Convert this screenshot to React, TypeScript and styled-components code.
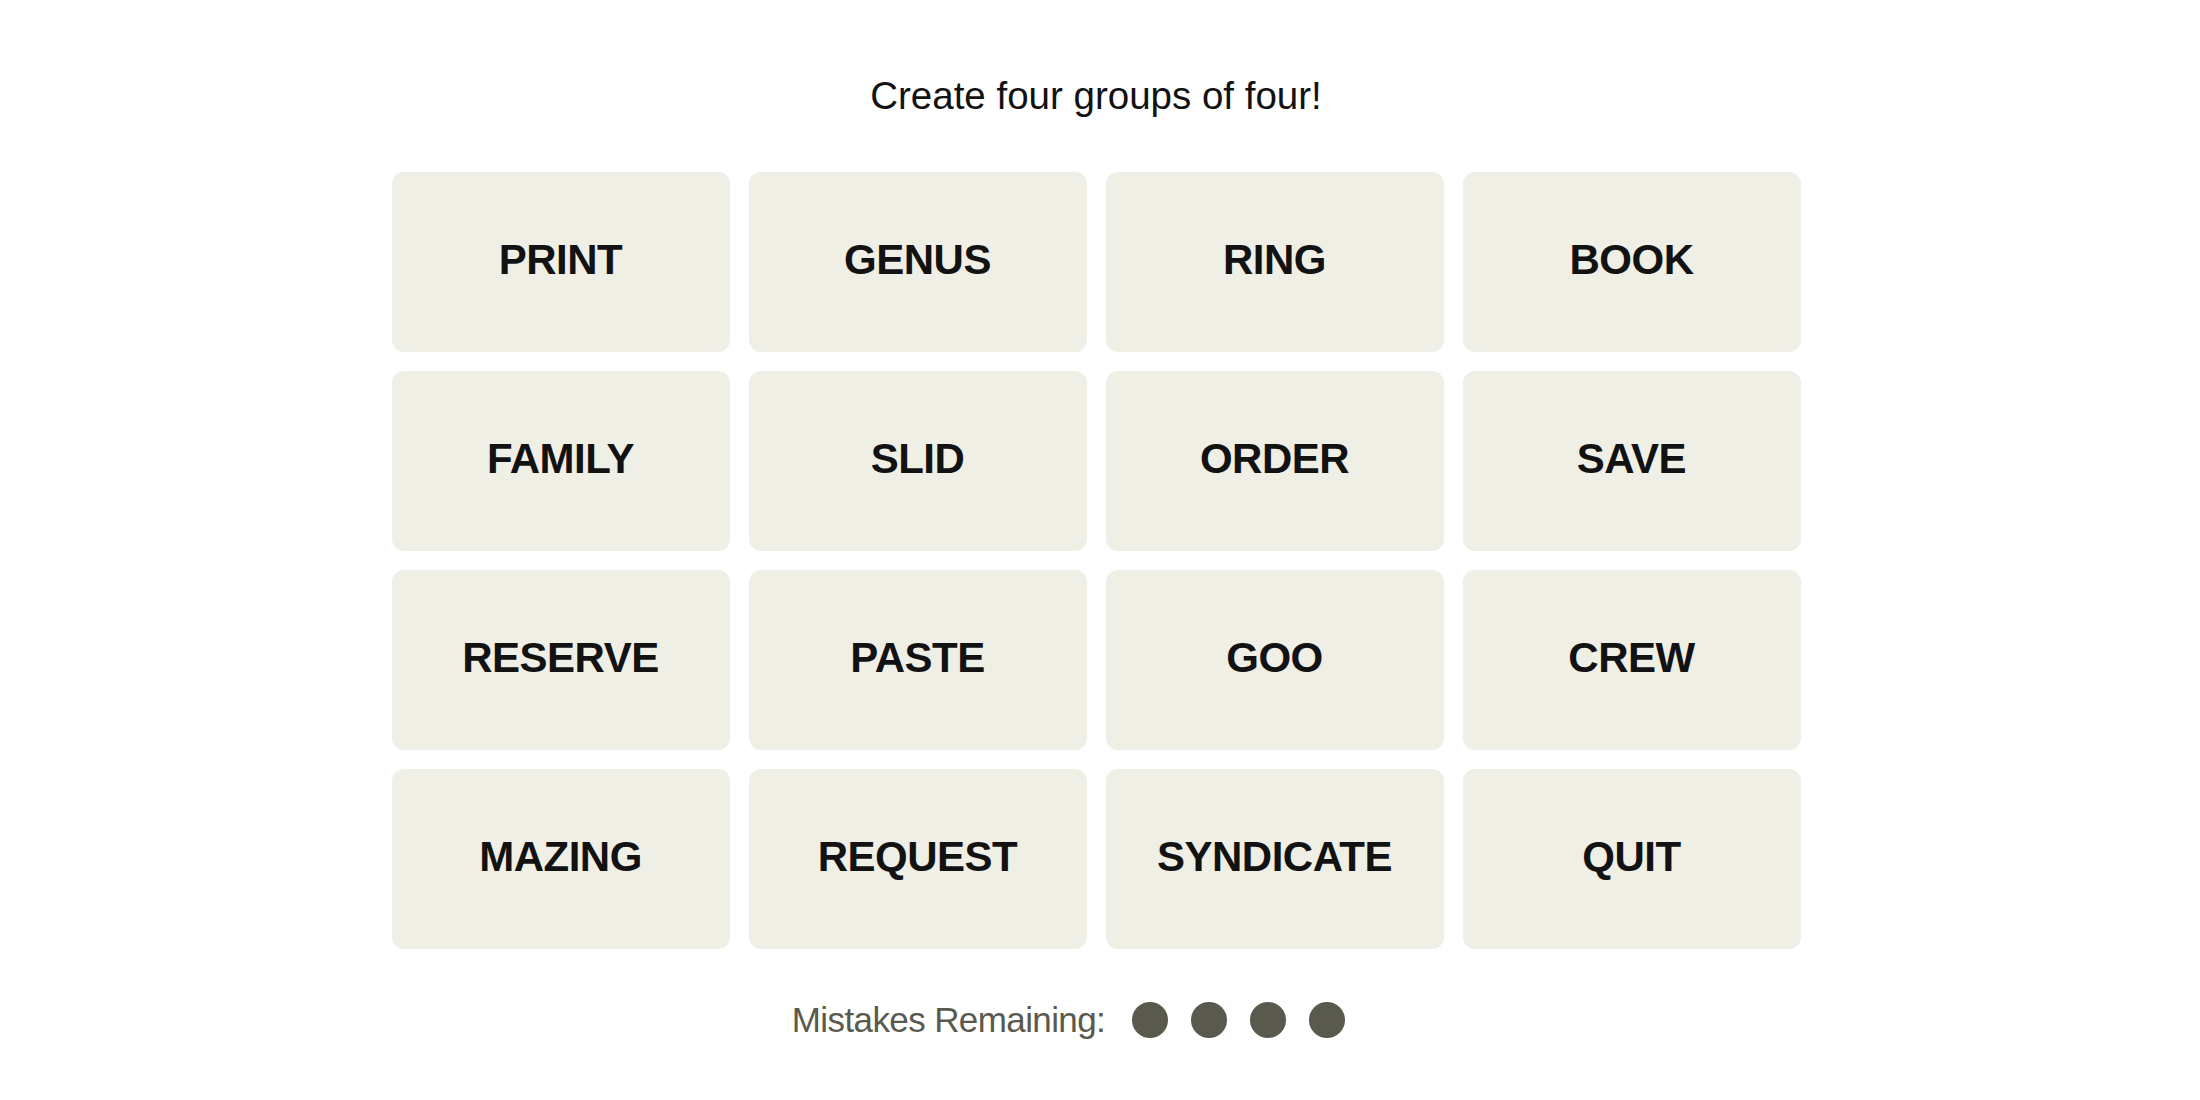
import React from "react";
import styled, { createGlobalStyle } from "styled-components";

const GlobalStyle = createGlobalStyle`
  html, body {
    margin: 0;
    padding: 0;
    background: #ffffff;
  }
  body {
    font-family: "Liberation Sans", Arial, sans-serif;
    color: #121212;
  }
`;

const Page = styled.main`
  display: flex;
  flex-direction: column;
  align-items: center;
  padding: 72px 8px 40px 0;
`;

const Title = styled.p`
  margin: 0;
  font-family: "Liberation Sans", Arial, sans-serif;
  font-size: 38.5px;
  line-height: 48px;
  font-weight: 400;
  color: #121212;
`;

const Board = styled.section`
  margin-top: 52px;
  display: grid;
  grid-template-columns: repeat(4, 338px);
  grid-auto-rows: 180px;
  gap: 19px;
`;

const Tile = styled.button`
  display: flex;
  align-items: center;
  justify-content: center;
  border: none;
  border-radius: 12px;
  background: #efefe6;
  padding: 0 0 4px 0;
  margin: 0;
  font-family: "Liberation Sans", Arial, sans-serif;
  font-weight: 700;
  font-size: 42px;
  letter-spacing: -0.5px;
  text-transform: uppercase;
  color: #121212;
  cursor: pointer;
`;

const MistakesRow = styled.div`
  margin-top: 51px;
  display: flex;
  align-items: center;
  height: 40px;
  padding-right: 55px;
`;

const MistakesLabel = styled.span`
  font-family: "Liberation Sans", Arial, sans-serif;
  font-size: 35px;
  line-height: 40px;
  letter-spacing: -0.6px;
  color: #5a594e;
`;

const Dots = styled.div`
  display: flex;
  align-items: center;
  gap: 23px;
  margin-left: 27px;
`;

const Dot = styled.span`
  display: block;
  width: 36px;
  height: 36px;
  border-radius: 50%;
  background: #5a594e;
`;

const words = [
  "PRINT", "GENUS", "RING", "BOOK",
  "FAMILY", "SLID", "ORDER", "SAVE",
  "RESERVE", "PASTE", "GOO", "CREW",
  "MAZING", "REQUEST", "SYNDICATE", "QUIT",
];

export default function App() {
  return (
    <>
      <GlobalStyle />
      <Page>
        <Title>Create four groups of four!</Title>
        <Board>
          {words.map((w) => (
            <Tile key={w}>{w}</Tile>
          ))}
        </Board>
        <MistakesRow>
          <MistakesLabel>Mistakes Remaining:</MistakesLabel>
          <Dots>
            {[0, 1, 2, 3].map((i) => (
              <Dot key={i} />
            ))}
          </Dots>
        </MistakesRow>
      </Page>
    </>
  );
}
